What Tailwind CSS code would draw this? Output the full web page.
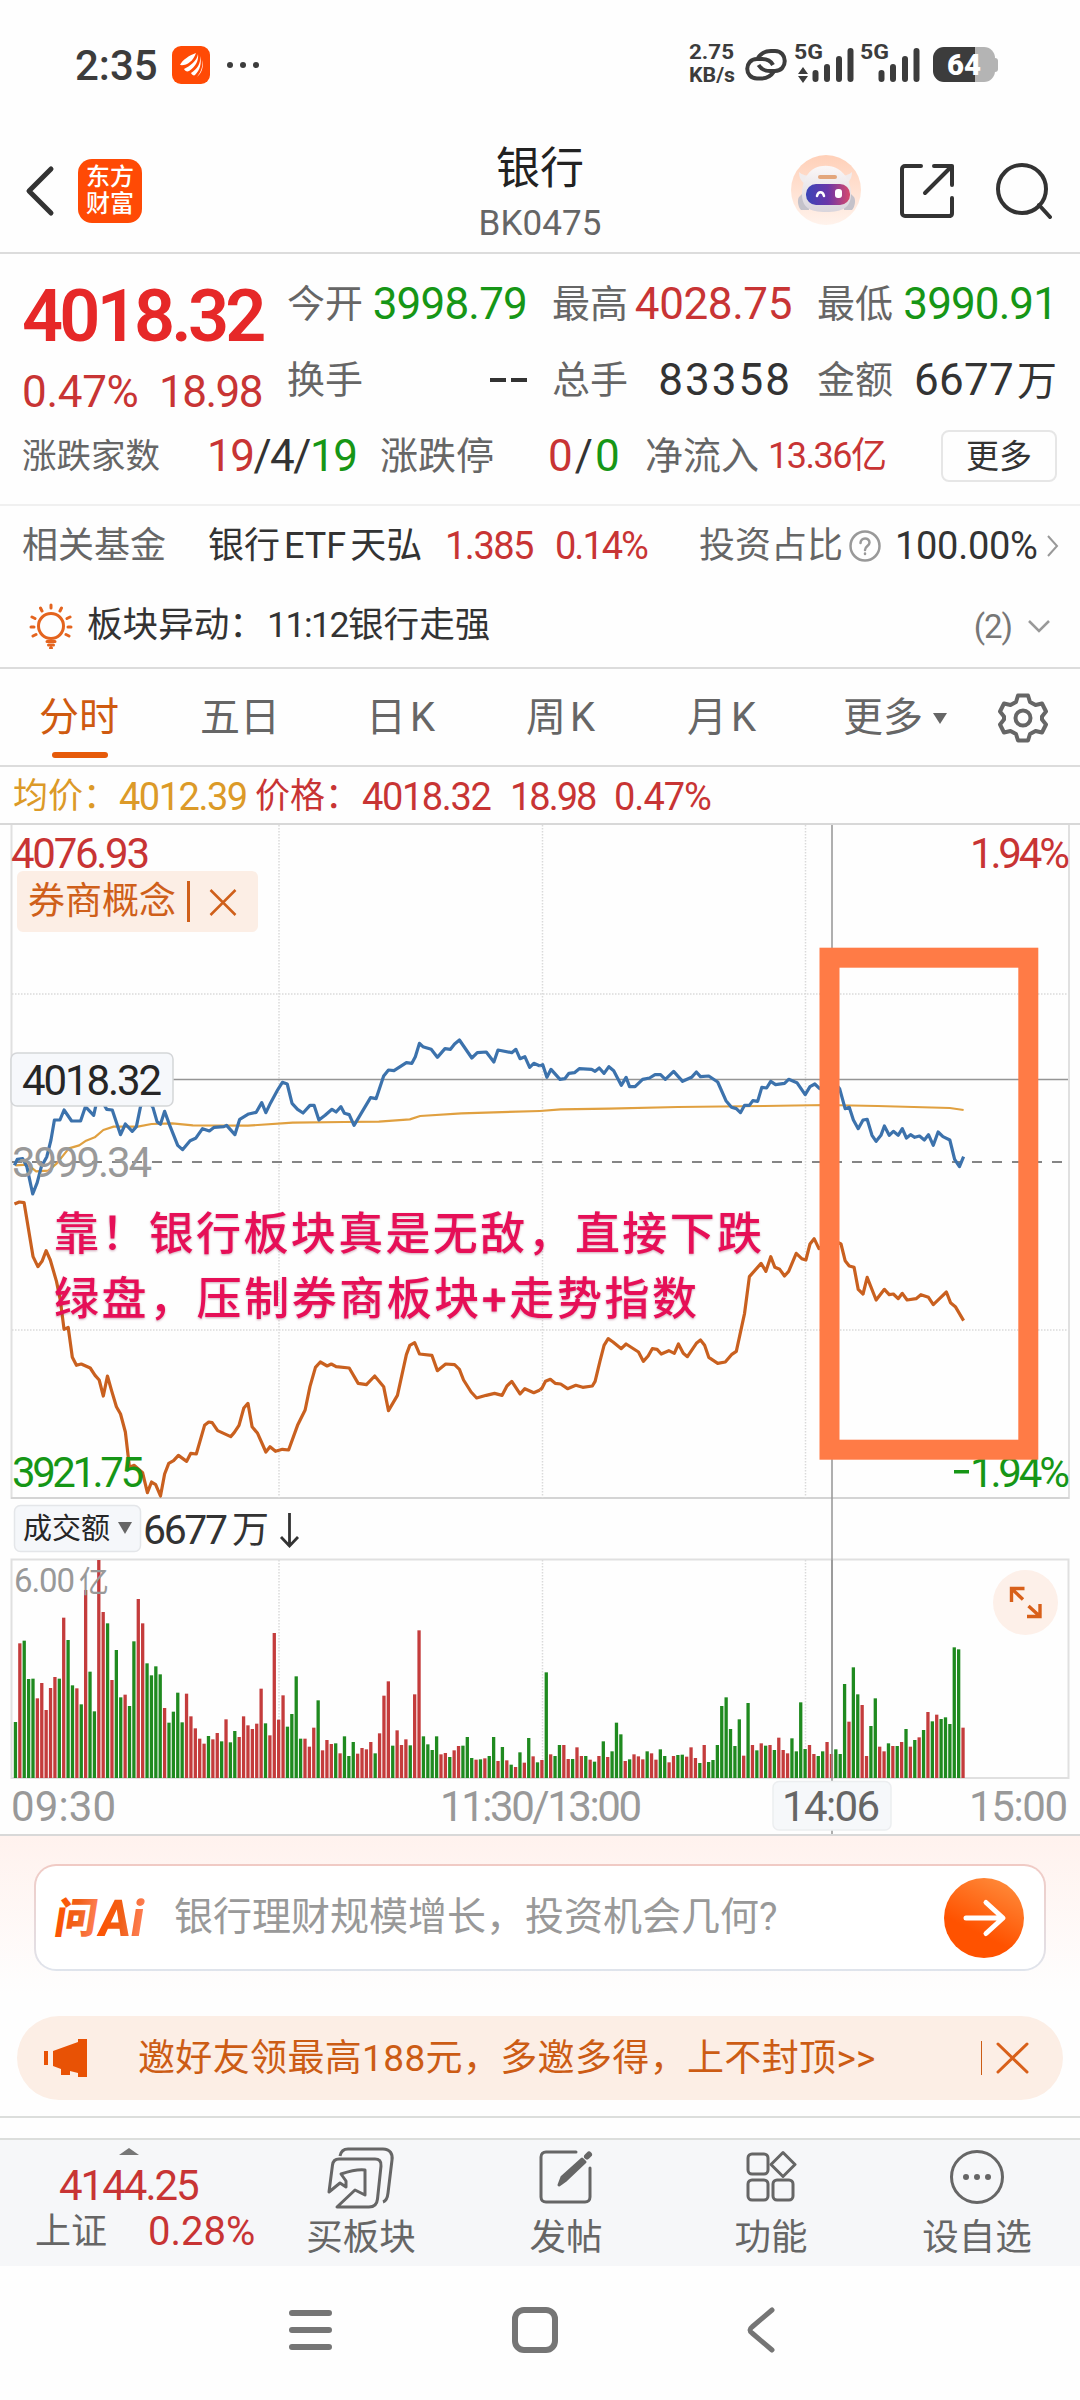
<!DOCTYPE html>
<html lang="zh-CN">
<head>
    <meta charset="UTF-8">
    <meta name="viewport" content="width=device-width, initial-scale=1.0">
    <title>银行 BK0475</title>
    <script src="https://cdn.jsdelivr.net/npm/@tailwindcss/browser@4"></script>
</head>
<body class="bg-white">
<div class="w-[1080px] h-[2400px] overflow-hidden bg-[#fefefe] font-['Roboto','Noto_Sans_CJK_SC',sans-serif] text-[#333] leading-none whitespace-nowrap">

    <!-- 状态栏 -->
    <div class="flex h-[130px] items-center justify-between pl-[75px] pr-[81px] text-[#3c3c3c]">
        <div class="flex items-center">
            <span class="w-[97px] pt-[2px] text-[42px] font-medium">2:35</span>
            <svg class="h-[38px] w-[38px]" viewBox="0 0 38 38">
                <rect width="38" height="38" rx="9" fill="#ff4a05"/>
                <path d="M24 7C18 9 10 14 8 19C14 20 21 16 24 7ZM26 8C25 15 18 20 12 23C13 25 15 26 17 25C23 21 27 15 26 8ZM28 10C29 18 25 23 19 27C20 29 22 30 23 29C28 24 30 17 28 10ZM30 14C31 21 29 26 25 31C30 27 32 20 30 14Z" fill="#fff"/>
            </svg>
            <div class="ml-[17px] flex gap-[7px]">
                <i class="h-[6px] w-[6px] rounded-full bg-[#3c3c3c]"></i>
                <i class="h-[6px] w-[6px] rounded-full bg-[#3c3c3c]"></i>
                <i class="h-[6px] w-[6px] rounded-full bg-[#3c3c3c]"></i>
            </div>
        </div>
        <svg class="h-[50px] w-[310px]" viewBox="689 40 310 50" fill="#3c3c3c">
            <g class="text-[21px] font-bold">
                <text x="689" y="59" textLength="45" lengthAdjust="spacingAndGlyphs">2.75</text>
                <text x="689" y="82" textLength="46" lengthAdjust="spacingAndGlyphs">KB/s</text>
                <text x="794" y="59" textLength="29" lengthAdjust="spacingAndGlyphs">5G</text>
                <text x="860" y="59" textLength="29" lengthAdjust="spacingAndGlyphs">5G</text>
            </g>
            <g fill="none" stroke="#3c3c3c" stroke-width="4">
                <path d="M758 58C761 53 766 51 771 51H775C788 51 788 71 775 71H770C765 71 761 69 758.500 65"/>
                <path d="M773.500 72C770.500 77 765 78.500 760 78.500H757C744 78.500 744 59 757 59H762C767 59 771 61 773 65"/>
            </g>
            <path d="M798 74l5-7l5 7zM798 76l5 7l5-7z"/>
            <g stroke="#3c3c3c" stroke-width="6" stroke-linecap="round">
                <path d="M815.500 73v6M827 67v12M839 59v20M850.500 51v28M881.500 73v6M893 67v12M905 59v20M916.500 51v28"/>
            </g>
            <rect x="935" y="47" width="60" height="35" rx="11" fill="#b4b4b4"/>
            <rect x="990" y="58" width="8" height="14" rx="3" fill="#b4b4b4"/>
            <path d="M944 47h31v35h-31a11 11 0 0 1-11-11v-13a11 11 0 0 1 11-11z"/>
            <text x="947" y="75" textLength="34" lengthAdjust="spacingAndGlyphs" fill="#fff" class="text-[29px] font-black">64</text>
        </svg>
    </div>

    <!-- 标题栏 -->
    <div class="relative flex h-[124px] items-center justify-between border-b-2 border-[#dcdcdc] pl-[25px] pr-[28px]">
        <div class="flex items-center gap-[23px]">
            <svg class="h-[54px] w-[30px]" viewBox="0 0 30 54" fill="none" stroke="#333" stroke-width="5" stroke-linecap="round" stroke-linejoin="round"><path d="M26 5L4 27L26 49"/></svg>
            <div class="flex h-[64px] w-[64px] flex-col items-center justify-center rounded-[14px] bg-[#ff4a05] text-[24px] leading-[27px] font-medium text-white">
                <span>东方</span><span>财富</span>
            </div>
        </div>
        <div class="absolute inset-x-0 top-[13px] flex flex-col items-center">
            <span class="text-[44px] leading-[52px] text-[#222]">银行</span>
            <span class="mt-[11px] text-[35px] leading-[36px] tracking-[0.100px] text-[#666]">BK0475</span>
        </div>
        <div class="flex items-center">
            <svg class="h-[72px] w-[72px]" viewBox="0 0 72 72">
                <defs>
                    <linearGradient id="halo" x1="0" y1="0" x2="0" y2="1"><stop offset="0" stop-color="#ffd0b8"/><stop offset="1" stop-color="#fff3ec"/></linearGradient>
                    <linearGradient id="visor" x1="0" y1="0" x2="1" y2="0"><stop offset="0" stop-color="#3a45b8"/><stop offset=".5" stop-color="#6a36a8"/><stop offset="1" stop-color="#d84a6c"/></linearGradient>
                    <linearGradient id="helmet" x1="0" y1="0" x2="0" y2="1"><stop offset="0" stop-color="#fbf7f7"/><stop offset="1" stop-color="#d9d5dc"/></linearGradient>
                </defs>
                <circle cx="36" cy="35" r="35" fill="url(#halo)"/>
                <path d="M9 42c-2 3-1 10 2 13h8V32zM64 42c2 3 1 10-2 13h-8V32z" fill="#c4c2ca"/>
                <path d="M9 17c0 5 2 9 5 11l9-7c-6 0-11-1-14-4zM62 17c0 5-2 9-5 11l-9-7c6 0 11-1 14-4z" fill="#f1eced"/>
                <path d="M25 13c7-3 16-3 23 1c8 5 13 14 13 25c0 13-8 18-25 18S12 52 12 39c0-12 5-22 13-26z" fill="url(#helmet)"/>
                <rect x="28" y="20" width="19" height="4" rx="2" fill="#e3a67c"/>
                <rect x="16" y="29" width="44" height="21" rx="10" fill="url(#visor)"/>
                <path d="M27 41c1-5 6-5 7 0" fill="none" stroke="#fff" stroke-width="2.500" stroke-linecap="round"/>
                <rect x="45" y="34" width="7" height="9" rx="3" fill="#fff"/>
            </svg>
            <svg class="ml-[38px] h-[56px] w-[56px]" viewBox="0 0 56 56" fill="none" stroke="#333" stroke-width="4" stroke-linecap="round" stroke-linejoin="round"><path d="M21 3H5a3 3 0 0 0-3 3v44a3 3 0 0 0 3 3h45a3 3 0 0 0 2-3V35M34 3h18v19M52 3L25 30"/></svg>
            <svg class="ml-[40px] h-[56px] w-[56px]" viewBox="0 0 56 56" fill="none" stroke="#333" stroke-width="4" stroke-linecap="round"><circle cx="26" cy="26" r="24"/><path d="M43 42l11 12"/></svg>
        </div>
    </div>

    <!-- 行情概览 -->
    <div class="h-[252px] border-b-2 border-[#f0f0f0] pt-[12px] pl-[22px] pr-[23px] text-[38px]">
        <div class="flex h-[152px]">
            <div class="w-[265px] text-[#c83434]">
                <div class="flex h-[100px] items-center pt-[2px] text-[72px] font-semibold tracking-[-3.800px] text-[#e62828]">4018.32</div>
                <div class="flex h-[52px] items-center justify-between pr-[25px] text-[44px]"><span class="tracking-[-0.300px]">0.47%</span><span class="tracking-[-1.500px]">18.98</span></div>
            </div>
            <div class="grid flex-1 grid-cols-3 gap-x-[25px] text-[#666]">
                <div class="flex h-[76px] items-center justify-between"><span>今开</span><span class="text-[44px] tracking-[-0.800px] text-[#169616]">3998.79</span></div>
                <div class="flex h-[76px] items-center justify-between"><span>最高</span><span class="text-[44px] tracking-[-0.400px] text-[#c83434]">4028.75</span></div>
                <div class="flex h-[76px] items-center justify-between"><span>最低</span><span class="text-[44px] tracking-[-0.900px] text-[#169616]">3990.91</span></div>
                <div class="flex h-[76px] items-center justify-between"><span>换手</span><span class="flex gap-[5px]"><i class="h-[4px] w-[16px] bg-[#333]"></i><i class="h-[4px] w-[16px] bg-[#333]"></i></span></div>
                <div class="flex h-[76px] items-center justify-between"><span>总手</span><span class="text-[44px] tracking-[2px] text-[#333]">83358</span></div>
                <div class="flex h-[76px] items-center justify-between"><span>金额</span><span class="text-[#333]"><span class="text-[44px] tracking-[0.300px]">6677</span><span class="ml-[3px] text-[40px]">万</span></span></div>
            </div>
        </div>
        <div class="flex h-[76px] items-center text-[#666]">
            <span class="w-[185px] text-[34.500px]">涨跌家数</span>
            <span class="w-[173px] text-[44px] tracking-[-1.500px] text-[#333]"><span class="text-[#c83434]">19</span>/4/<span class="text-[#169616]">19</span></span>
            <span class="w-[168px]">涨跌停</span>
            <span class="w-[97px] text-[44px] tracking-[2px] text-[#333]"><span class="text-[#c83434]">0</span>/<span class="text-[#169616]">0</span></span>
            <span class="w-[123px]">净流入</span>
            <span class="w-[152px] text-[36px] tracking-[-1.500px] text-[#c83434]">13.36亿</span>
            <span class="ml-auto flex h-[52px] w-[116px] items-center justify-center rounded-[8px] border-2 border-[#e6e6e6] text-[33px] text-[#333]">更多</span>
        </div>
    </div>

    <!-- 相关基金 -->
    <div class="flex h-[77px] items-center pt-[2px] pl-[22px] text-[36px]">
        <span class="w-[186px] text-[#666]">相关基金</span>
        <span class="w-[237px]">银行<span class="mx-[4px]">ETF</span>天弘</span>
        <span class="w-[110px] text-[38px] tracking-[-1.500px] text-[#c83434]">1.385</span>
        <span class="w-[144px] text-[38px] tracking-[-2px] text-[#c83434]">0.14%</span>
        <span class="w-[150px] text-[#666]">投资占比</span>
        <svg class="h-[32px] w-[32px]" viewBox="0 0 32 32" fill="none" stroke="#999" stroke-width="2.500" stroke-linecap="round"><circle cx="16" cy="16" r="14.500"/><path d="M11.500 13c0-6 9-6 9-.5c0 3.500-4.500 3.500-4.500 7.500M16 23.500v.5"/></svg>
        <span class="ml-[14px] w-[151px] text-[38px] tracking-[-0.300px]">100.00%</span>
        <svg class="h-[24px] w-[13px]" viewBox="0 0 13 24" fill="none" stroke="#999" stroke-width="2"><path d="M2 2l9 10l-9 10"/></svg>
    </div>

    <!-- 板块异动 -->
    <div class="flex h-[86px] items-center border-b-2 border-[#dcdcdc] pt-[2px] pl-[29px] pr-[29px] text-[35.600px]">
        <svg class="h-[46px] w-[46px]" viewBox="0 0 46 46" fill="none" stroke="#e4641e" stroke-width="3" stroke-linecap="round"><circle cx="22" cy="23" r="12.500"/><path d="M22 2v3M11.500 5l1.500 3M32.500 5l-1.500 3M3 14l3 1.500M41 14l-3 1.500M2 24h3M39 24h3M4 33l3-1.500M40 33l-3-1.500M18 38.500h8M19.500 42h5M21.500 45h1"/></svg>
        <span class="ml-[12px]">板块异动：<span class="ml-[2px] tracking-[-1.500px]">11:12</span>银行走强</span>
        <span class="ml-auto text-[33px] tracking-[-1px] text-[#777]">(2)</span>
        <svg class="ml-[15px] h-[14px] w-[24px]" viewBox="0 0 24 14" fill="none" stroke="#999" stroke-width="2.500"><path d="M2 2l10 10l10-10"/></svg>
    </div>

    <!-- 周期切换 -->
    <div class="flex h-[98px] items-center border-b-2 border-[#dcdcdc] pt-[2px] pl-[39px] text-[40px] text-[#666]">
        <span class="relative w-[161px] text-[#cf5a10]">分时<i class="absolute top-[54px] left-[13px] h-[6px] w-[56px] rounded-full bg-[#e65a0a]"></i></span>
        <span class="w-[166px]">五日</span>
        <span class="w-[160px]">日<span class="ml-[4px]">K</span></span>
        <span class="w-[161px]">周<span class="ml-[4px]">K</span></span>
        <span class="w-[156px]">月<span class="ml-[4px]">K</span></span>
        <span>更多</span>
        <svg class="ml-[9px] h-[12px] w-[16px]" viewBox="0 0 16 12"><path d="M1 1h14l-7 11z" fill="#666"/></svg>
        <svg class="ml-[50px] h-[50px] w-[50px]" viewBox="0 0 50 50" fill="none" stroke="#666" stroke-width="4" stroke-linejoin="round"><path d="M20 2.500h10l2 6.500l5.500 3l6.500-1.500l4 8l-4 5v3l4 5l-4 8l-6.500-1.500l-5.500 3l-2 6.500h-10l-2-6.500l-5.500-3l-6.500 1.500l-4-8l4-5v-3l-4-5l4-8l6.500 1.500l5.500-3z"/><circle cx="25" cy="25" r="7.500"/></svg>
    </div>

    <!-- 均价 / 价格 -->
    <div class="flex h-[58px] items-center border-b-2 border-[#d8d8d8] pt-[3px] pl-[13px] text-[35px] text-[#c83434]">
        <span class="w-[106px] text-[#dc9a28]">均价：</span>
        <span class="w-[136px] text-[38px] tracking-[-1.500px] text-[#dc9a28]">4012.39</span>
        <span class="w-[107px]">价格：</span>
        <span class="w-[148px] text-[38px] tracking-[-1.400px]">4018.32</span>
        <span class="w-[104px] text-[38px] tracking-[-2px]">18.98</span>
        <span class="text-[38px] tracking-[-1px]">0.47%</span>
    </div>

    <!-- 分时图与成交额，坐标与页面像素一致 -->
    <svg class="block h-[1009px] w-[1080px] border-b-2 border-[#d8d8d8] box-content" viewBox="0 825 1080 1009">
        <g fill="none" stroke="#e0e0e0" stroke-width="2">
            <path d="M11.500 825V1498H1069V825" />
            <path d="M11 1498H1069" stroke="#d4d4d4"/>
            <rect x="11.500" y="1559.500" width="1057" height="218.500"/>
        </g>
        <path d="M12 994H1068M12 1330H1068M279 825V1498M542.500 825V1498M805.500 825V1498M279 1560V1778M542.500 1560V1778M805.500 1560V1778" stroke="#dadada" stroke-width="1.500" stroke-dasharray="1.500 1.500" fill="none"/>
        <path d="M12 1162H1066" stroke="#858585" stroke-width="2" stroke-dasharray="10 10" fill="none"/>
        <path d="M173 1079.500H1068M832 825V1834" stroke="#959595" stroke-width="1.500" fill="none"/>

        <!-- 均价线 -->
        <g fill="none" stroke="#e0a040" stroke-width="2.200" stroke-linejoin="round">
            <polyline vector-effect="non-scaling-stroke" transform="translate(0 820) scale(.34439 .33333)" points="45,1036 80,1034 105,1054 140,1052 165,1030 200,985 230,976 250,962 275,952 300,930 330,920 400,920 440,912 500,910 560,916 720,917 850,908 1000,906 1100,905 1190,898 1220,888 1340,880 1568,873"/>
            <polyline vector-effect="non-scaling-stroke" transform="translate(540 820) scale(.34439 .33333)" points="0,873 60,868 200,866 400,861 650,858 830,855 980,858 1190,864 1230,870"/>
        </g>
        <!-- 价格线 -->
        <g fill="none" stroke="#3c72ac" stroke-width="3.200" stroke-linejoin="round">
            <polyline vector-effect="non-scaling-stroke" transform="translate(0 820) scale(.34439 .33333)" points="42,1036 50,1018 66,1016 78,1040 95,1122 108,1088 120,1040 136,1010 148,960 158,900 174,900 186,870 208,903 234,903 248,860 272,886 282,840 300,850 310,868 326,870 350,944 364,912 384,934 396,920 408,860 425,835 444,862 456,905 466,913 478,874 492,914 516,976 530,989 552,962 568,955 588,926 608,933 622,922 650,920 658,916 682,944 696,898 722,882 744,877 760,848 772,878 786,848 806,810 820,787 834,792 848,850 864,868 880,879 900,856 912,856 926,900 944,886 964,868 976,876 990,860 1000,880 1014,884 1028,916 1050,878 1076,833 1092,836 1114,768 1128,750 1144,752 1180,728 1196,730 1206,710 1218,670 1228,680 1252,688 1270,712 1292,686 1308,688 1320,672 1334,660 1370,714 1386,698 1412,696 1434,726 1446,690 1486,698 1498,688 1510,716 1524,710 1538,742 1550,730 1568,738"/>
            <polyline vector-effect="non-scaling-stroke" transform="translate(540 820) scale(.34439 .33333)" points="0,738 8,734 20,772 32,748 58,778 72,776 84,760 100,758 114,746 150,748 160,754 172,744 186,760 200,740 214,752 236,796 250,772 260,800 276,800 298,778 318,774 334,764 350,764 364,778 388,754 414,784 440,772 454,756 466,770 490,768 516,786 540,842 556,862 570,866 582,878 594,856 608,856 618,842 632,844 644,802 658,804 670,784 684,794 710,790 722,778 746,788 770,824 784,800 798,792 812,806 850,780 870,806 886,866 898,862 910,900 924,926 938,900 950,898 964,946 976,964 990,946 1000,918 1014,946 1026,934 1040,946 1052,926 1064,954 1076,944 1088,952 1102,948 1116,960 1128,944 1142,976 1156,936 1170,950 1190,960 1204,1018 1218,1040 1230,1010"/>
        </g>
        <!-- 券商概念叠加线 -->
        <g fill="none" stroke="#c9601f" stroke-width="3.200" stroke-linejoin="round">
            <polyline vector-effect="non-scaling-stroke" transform="translate(0 1160) scale(.34439 .33333)" points="42,132 56,126 70,128 96,290 110,320 122,304 134,272 146,300 164,364 175,420 186,508 198,502 210,592 222,616 236,612 262,624 276,646 288,660 300,708 312,648 324,692 338,740 350,762 364,816 376,922 390,916 414,938 428,998 440,966 452,974 466,1008 478,942 490,910 504,902 518,886 542,904 554,880 570,882 594,796 606,786 616,788 632,812 670,830 680,818 694,796 708,744 720,730 732,800 748,820 772,876 784,860 800,874 820,868 838,870 864,796 886,750 900,680 916,622 930,606 950,618 962,612 976,620 1014,624 1040,670 1064,674 1088,648 1114,680 1128,752 1154,706 1180,584 1190,556 1204,548 1218,582 1254,586 1270,632 1294,612 1320,614 1334,628 1346,660 1368,696 1384,714 1412,706 1436,700 1458,706 1472,678 1486,664 1510,702 1524,686 1550,698 1568,690"/>
            <polyline vector-effect="non-scaling-stroke" transform="translate(540 1160) scale(.34439 .33333)" points="0,690 6,684 16,664 30,658 44,670 60,672 80,686 104,676 124,682 152,678 160,664 174,604 186,556 198,536 212,546 236,566 250,552 286,576 300,604 314,588 326,566 340,568 352,582 374,572 390,580 402,552 416,580 428,590 454,550 466,540 478,556 490,592 516,610 538,606 556,584 570,574 594,460 608,350 642,310 656,334 670,290 682,322 696,328 710,348 722,334 744,280 760,296 772,300 784,252 796,236 810,266 850,240 874,252 886,302 898,318 912,322 924,388 938,402 950,352 976,420 1000,388 1014,404 1026,402 1040,416 1052,400 1066,420 1092,416 1106,404 1128,412 1142,434 1160,416 1180,396 1192,428 1206,440 1230,482"/>
        </g>
        <g id="volumeBars"></g>
        <path d="M832 1560V1778" stroke="#959595" stroke-width="1.500"/>

        <!-- 坐标标签 -->
        <g class="text-[42px]">
            <text x="11" y="868" textLength="139" fill="#c83434">4076.93</text>
            <text x="970" y="868" textLength="100" fill="#c83434">1.94%</text>
            <text x="12" y="1177" textLength="140" fill="#999">3999.34</text>
            <text x="12" y="1487" textLength="132" fill="#169616">3921.75</text>
            <text x="970" y="1487" textLength="100" fill="#169616">1.94%</text>
            <rect x="954" y="1470" width="15" height="3.500" fill="#169616"/>
        </g>
        <text x="14" y="1592" textLength="61" fill="#999" class="text-[33px]">6.00</text>
        <text x="79" y="1592" fill="#999" class="text-[30px]">亿</text>
        <rect x="11" y="1053" width="162" height="53" rx="6" fill="#f6f8fb" stroke="#d4d6d8" stroke-width="1.500"/>
        <text x="22" y="1095" textLength="140" fill="#262626" class="text-[42px]">4018.32</text>

        <rect x="17" y="871" width="241" height="61" rx="6" fill="#fceee5"/>
        <text x="28" y="914" textLength="148" fill="#cf5f1a" class="text-[37px]">券商概念</text>
        <path d="M188.500 881v41" stroke="#cf5f1a" stroke-width="3"/>
        <path d="M210.500 890l25 25M235.500 890l-25 25" stroke="#cf5f1a" stroke-width="2.500"/>

        <!-- 标注 -->
        <g fill="#e60f57" class="text-[45px] font-medium drop-shadow-[0_1px_1px_rgba(120,0,50,0.35)]">
            <text x="54" y="1250" textLength="708">靠！银行板块真是无敌，直接下跌</text>
            <text x="54" y="1315" textLength="643">绿盘，压制券商板块+走势指数</text>
        </g>
        <rect x="829.500" y="957.700" width="198.800" height="492" fill="none" stroke="#ff7b46" stroke-width="20"/>

        <!-- 成交额 -->
        <rect x="14.500" y="1505.500" width="126" height="46" rx="6" fill="#f5f7fa" stroke="#e4e6e9" stroke-width="1.500"/>
        <text x="23" y="1539" textLength="87" fill="#262626" class="text-[29px]">成交额</text>
        <path d="M118 1522h14l-7 12z" fill="#666"/>
        <text x="143" y="1544" textLength="85" fill="#333" class="text-[41px]">6677</text>
        <text x="232" y="1543" fill="#333" class="text-[37px]">万</text>
        <path d="M289.500 1513v33M281 1537l8.500 9l8.500-9" fill="none" stroke="#333" stroke-width="2.800"/>

        <circle cx="1025.500" cy="1602.500" r="32.500" fill="#fdf0e9"/>
        <path d="M1011.500 1602v-13.500h13M1012 1589l11 10.500M1040 1604v12.500h-13M1028.500 1606l11 10" fill="none" stroke="#d8601a" stroke-width="3.400"/>

        <!-- 时间轴 -->
        <rect x="773" y="1781.500" width="118" height="48.500" rx="6" fill="#f6f8fa" stroke="#eceef0" stroke-width="1.500"/>
        <g fill="#999" class="text-[42px]">
            <text x="11" y="1821" textLength="105">09:30</text>
            <text x="440" y="1821" textLength="202">11:30/13:00</text>
            <text x="782" y="1821" textLength="98" fill="#666">14:06</text>
            <text x="969" y="1821" textLength="99">15:00</text>
        </g>
    </svg>

    <!-- 问AI -->
    <div class="h-[158px] bg-linear-to-b from-[#fff2ee] to-[#fefefe] px-[34px] pt-[28px]">
        <div class="h-[107px] rounded-[22px] bg-linear-to-b from-[#f0cac4] to-[#dfe4ec] p-[2px]">
            <div class="flex h-full items-center rounded-[20px] bg-white pl-[13px] pr-[19px]">
                <svg class="h-[60px] w-[106px]" viewBox="-4 -7 106 60">
                    <defs><linearGradient id="askAi" x1="0" x2="1"><stop offset="0" stop-color="#ff5200"/><stop offset=".5" stop-color="#f06018"/><stop offset="1" stop-color="#ff8058"/></linearGradient></defs>
                    <g fill="url(#askAi)">
                        <text x="6" y="38" transform="skewX(-9)" class="text-[42px] font-black">问</text>
                        <text x="50" y="41" textLength="45" lengthAdjust="spacingAndGlyphs" transform="skewX(-9)" class="text-[51px] font-extrabold">Ai</text>
                    </g>
                </svg>
                <span class="ml-[19px] text-[39px] text-[#999]">银行理财规模增长，投资机会几何?</span>
                <svg class="ml-auto h-[82px] w-[82px]" viewBox="0 0 82 82">
                    <defs><linearGradient id="go" x1=".8" y1="0" x2=".3" y2="1"><stop offset="0" stop-color="#ff8c3c"/><stop offset=".7" stop-color="#ff5200"/></linearGradient></defs>
                    <circle cx="41" cy="41" r="40" fill="url(#go)"/>
                    <path d="M23 41h36M43 25.500L60 41L43 56.500" fill="none" stroke="#fff" stroke-width="5" stroke-linecap="round" stroke-linejoin="round"/>
                </svg>
            </div>
        </div>
    </div>

    <!-- 活动横幅 -->
    <div class="mt-[22px] mr-[17px] mb-[16px] ml-[17px] flex h-[84px] items-center rounded-full bg-[#fceee5] pl-[27px] pr-[34px] text-[37px] text-[#cc5c14]">
        <svg class="h-[38px] w-[44px]" viewBox="0 0 44 38" fill="#e85205"><path d="M0 12h4v14H0zM9 12L34 3V0h9v38h-9v-4l-8-2v4h-9v-6L9 27z"/></svg>
        <span class="ml-[50px] w-[745px] tracking-[0.350px]">邀好友领最高188元，多邀多得，上不封顶&gt;&gt;</span>
        <i class="ml-auto h-[34px] w-px bg-[#cc5c14]"></i>
        <svg class="ml-[14px] h-[32px] w-[33px]" viewBox="0 0 33 32" fill="none" stroke="#d8601a" stroke-width="3" stroke-linecap="round"><path d="M2 2l29 28M31 2L2 30"/></svg>
    </div>

    <div class="h-[24px] border-y-2 border-[#dcdedc] box-border"></div>

    <!-- 底部工具栏 -->
    <div class="flex h-[126px] bg-[#f6f7f9] text-[36.500px] text-[#666]">
        <div class="relative w-[290px] text-[#c83434]">
            <svg class="absolute top-[8px] left-[119px] h-[7px] w-[20px]" viewBox="0 0 20 7"><path d="M10 0l10 7H0z" fill="#777"/></svg>
            <div class="flex h-[70px] items-center pt-[22px] pl-[59px] text-[42px] tracking-[-2px]">4144.25</div>
            <div class="flex h-[44px] items-center pl-[35px] text-[36px]"><span class="w-[113px] text-[#666]">上证</span><span class="text-[40px]">0.28%</span></div>
        </div>
        <div class="flex w-[142px] flex-col items-center pt-[7px]">
            <svg class="h-[62px] w-[68px]" viewBox="0 0 68 62" fill="none" stroke="#666" stroke-width="3" stroke-linejoin="round"><path d="M13 9C14 4 17 2 21 2H56C63 2 66 7 65 13L61 46C60.500 51 59 54 56 55"/><path d="M10 60H42C48 60 50 57 50.500 52L54 19C54.500 14 52 12 48 12H12C8 12 6 14 5.500 18L2 45L13 36L19 40V34L14 27C20 25 31 22 38 23V48L28 43z"/></svg>
            <span class="mt-[11px]">买板块</span>
        </div>
        <div class="ml-[63px] flex w-[142px] flex-col items-center pt-[7px]">
            <svg class="h-[62px] w-[56px]" viewBox="0 0 56 62" fill="none" stroke="#666" stroke-width="3" stroke-linejoin="round" stroke-linecap="round"><path d="M38 5H8C5 5 3 7 3 10V50C3 53 5 55 8 55H47C50 55 52 53 52 50V21"/><path d="M21 38L24 30L44 12L47 15L28 33z" fill="#666"/><path d="M49 9.500L51 7.500" stroke-width="6"/></svg>
            <span class="mt-[11px]">发帖</span>
        </div>
        <div class="ml-[63px] flex w-[142px] flex-col items-center pt-[7px]">
            <svg class="h-[62px] w-[52px]" viewBox="0 0 52 62" fill="none" stroke="#666" stroke-width="3" stroke-linejoin="round"><rect x="3" y="7" width="20" height="20" rx="4"/><rect x="3" y="33" width="20" height="20" rx="4"/><rect x="28" y="33" width="20" height="20" rx="4"/><path d="M38 5.500L50 17.500L38 29.500L26 17.500z"/></svg>
            <span class="mt-[11px]">功能</span>
        </div>
        <div class="ml-[64px] flex w-[142px] flex-col items-center pt-[7px]">
            <svg class="h-[62px] w-[56px]" viewBox="0 0 56 62" fill="none" stroke="#666" stroke-width="3"><circle cx="28" cy="30" r="25.500"/><g fill="#666" stroke="none"><circle cx="17" cy="30" r="3"/><circle cx="28" cy="30" r="3"/><circle cx="39" cy="30" r="3"/></g></svg>
            <span class="mt-[11px]">设自选</span>
        </div>
    </div>

    <!-- 系统导航 -->
    <div class="flex h-[128px] items-center pl-[288px]">
        <svg class="h-[50px] w-[488px]" viewBox="289 2305 488 50" fill="none" stroke="#757575" stroke-linecap="round" stroke-linejoin="round">
            <path d="M293 2313H330M293 2330H330M293 2347H330" stroke-width="6"/>
            <rect x="516" y="2310" width="40" height="40" rx="9" stroke-width="6"/>
            <path d="M773 2310L753 2327Q749 2330 753 2333L773 2350" stroke-width="5"/>
        </svg>
    </div>
</div>

<script>
    // 每分钟一根：r 涨 / g 跌，数值为柱顶到绘图区顶部的距离（1/3 像素）
    const volume = `g666 r430 g422 g537 g536 r595 r549 r630 r564 r531 g536 r353 g420 g556 r565 g613 r270 g515 g634 r180
        r336 g370 r540 g450 g592 r584 g618 g424 r297 r370 g490 g526 g499 g523 r624 g668 g635 g578 g667 r581
        r649 r685 r716 r731 g708 r718 r699 g724 r658 g727 g693 r711 r649 r676 r687 r671 r566 g670 r706 r399
        r659 r586 g680 g642 g529 g716 r716 r740 r683 g601 r751 r720 r732 g730 r760 g709 g768 g726 r761 r744
        r748 r726 g760 r700 r587 r544 g737 r691 r735 r718 g736 r583 r391 g709 g733 g750 g709 r763 r759 g771
        r751 r738 g737 g711 g774 r779 g778 r775 g768 g711 r783 g741 r781 g794 r801 g757 r788 g714 r769 g787
        r780 g517 r763 g768 g735 r735 r777 g777 r742 r768 g768 r779 g785 r768 g724 r771 g754 g668 g703 r783
        g778 r763 r769 r778 g754 r760 r779 g748 g768 r787 r768 g765 g764 r770 r742 r774 g789 r735 g786 g780
        g735 g618 g592 g687 g738 g658 r767 g609 r735 g751 r730 g737 r735 g750 r713 r750 r760 g715 g754 g607
        g747 r735 r762 g768 g754 r726 r762 g748 g762 g552 r665 g502 g583 r615 r768 g678 g595 r740 r754 g730
        r738 g738 r726 g687 r740 g720 r712 g690 r636 g664 r644 g657 g652 g672 g442 g448 r683`.split(/\s+/);
    const bars = document.getElementById('volumeBars');
    volume.forEach((v, i) => {
        const bar = document.createElementNS('http://www.w3.org/2000/svg', 'rect');
        const top = 1500 + Number(v.slice(1)) / 3;
        bar.setAttribute('x', 13.8 + i * 4.387);
        bar.setAttribute('y', top);
        bar.setAttribute('width', 3.3);
        bar.setAttribute('height', 1778 - top);
        bar.setAttribute('fill', v[0] === 'r' ? '#c43c3c' : '#1f8a1f');
        bars.appendChild(bar);
    });
</script>
</body>
</html>
